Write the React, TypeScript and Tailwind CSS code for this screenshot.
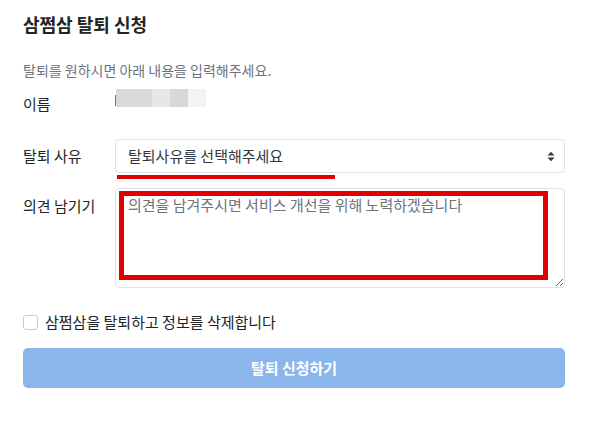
import React from 'react';

export default function App() {
  return (
    <div className="w-[600px] h-[442px] bg-white pl-[23px] pr-[35px] overflow-hidden" style={{ fontFamily: '"Noto Sans CJK KR", "Noto Sans", sans-serif' }}>
      {/* Title */}
      <h1 className="pt-[12px] text-[18px] leading-[24px] font-bold text-[#212529]">삼쩜삼 탈퇴 신청</h1>
      <p className="mt-[24px] text-[14px] leading-[20px] text-[#6c757d]">탈퇴를 원하시면 아래 내용을 입력해주세요.</p>

      {/* Name */}
      <div className="mt-[6px] flex items-start">
        <span className="w-[92px] text-[15px] leading-[36px] text-[#212529]">이름</span>
        <div className="mt-[3px] flex h-[18px] items-end">
          <div className="mb-[1px] h-[11px] w-px bg-[#c4572c]"></div>
          <div className="h-[18px] w-[36px] bg-[#d9d9da]"></div>
          <div className="h-[18px] w-[18px] bg-[#e7e7e8]"></div>
          <div className="h-[18px] w-[18px] bg-[#d8d8d9]"></div>
          <div className="h-[18px] w-[18px] bg-[#f2f3f3]"></div>
        </div>
      </div>

      {/* Reason */}
      <div className="mt-[17px] flex items-center">
        <span className="w-[92px] text-[15px] leading-[20px] text-[#212529]">탈퇴 사유</span>
        <div className="relative flex h-[34px] flex-1 items-center justify-between rounded-[4px] border border-[#dee2e6] pl-[12px] pr-[8px]">
          <span className="text-[15px] text-[#343a40]">탈퇴사유를 선택해주세요</span>
          <svg width="8" height="11" viewBox="0 0 8 11" className="mr-[1px]">
            <path d="M0.5 4.5 L4 0.8 L7.5 4.5 Z" fill="#343a40" />
            <path d="M0.5 6.5 L4 10.2 L7.5 6.5 Z" fill="#343a40" />
          </svg>
          <div className="absolute left-[1px] top-full mt-[3px] h-[4px] w-[218px] bg-[#e00000]"></div>
        </div>
      </div>

      {/* Opinion */}
      <div className="mt-[15px] flex items-start">
        <span className="w-[92px] pt-[8px] text-[15px] leading-[20px] text-[#212529]">의견 남기기</span>
        <div className="relative h-[100px] flex-1">
          <textarea
            className="block h-full w-full resize-y rounded-[4px] border border-[#dee2e6] px-[12px] py-[6px] text-[15px] leading-[20px] text-[#212529] outline-none placeholder:text-[#6c757d]"
            placeholder="의견을 남겨주시면 서비스 개선을 위해 노력하겠습니다"
          ></textarea>
          <div className="pointer-events-none absolute left-[4px] top-[3px] right-[17px] bottom-[8px] border-[5px] border-[#e00000]"></div>
        </div>
      </div>

      {/* Agree */}
      <div className="mt-[24px] flex h-[20px] items-center gap-[7px]">
        <div className="h-[15px] w-[15px] rounded-[3px] border border-[#c6cacf] bg-white"></div>
        <span className="text-[15px] text-[#212529]">삼쩜삼을 탈퇴하고 정보를 삭제합니다</span>
      </div>

      {/* Submit */}
      <button className="mt-[16px] flex h-[40px] w-full items-center justify-center rounded-[5px] bg-[#8ab6ec] text-[15px] font-bold text-white">
        탈퇴 신청하기
      </button>
    </div>
  );
}
